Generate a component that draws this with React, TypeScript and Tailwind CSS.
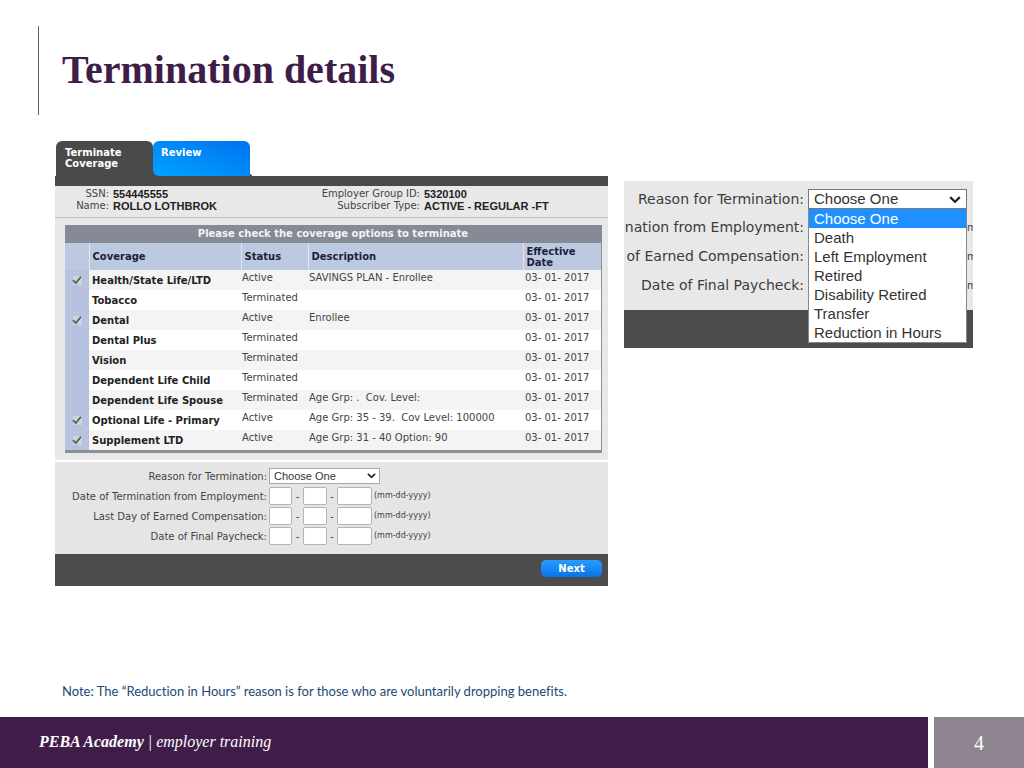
import React from "react";

type Coverage = {
  name: string;
  status: string;
  description: string;
  checked: boolean;
};

const coverages: Coverage[] = [
  { name: "Health/State Life/LTD", status: "Active", description: "SAVINGS PLAN - Enrollee", checked: true },
  { name: "Tobacco", status: "Terminated", description: "", checked: false },
  { name: "Dental", status: "Active", description: "Enrollee", checked: true },
  { name: "Dental Plus", status: "Terminated", description: "", checked: false },
  { name: "Vision", status: "Terminated", description: "", checked: false },
  { name: "Dependent Life Child", status: "Terminated", description: "", checked: false },
  { name: "Dependent Life Spouse", status: "Terminated", description: "Age Grp: .  Cov. Level:", checked: false },
  { name: "Optional Life - Primary", status: "Active", description: "Age Grp: 35 - 39.  Cov Level: 100000", checked: true },
  { name: "Supplement LTD", status: "Active", description: "Age Grp: 31 - 40 Option: 90", checked: true },
];

const reasons = [
  "Choose One",
  "Death",
  "Left Employment",
  "Retired",
  "Disability Retired",
  "Transfer",
  "Reduction in Hours",
];

const dateFields = [
  { id: "termination-date", label: "Date of Termination from Employment:" },
  { id: "last-day", label: "Last Day of Earned Compensation:" },
  { id: "final-paycheck", label: "Date of Final Paycheck:" },
];

function Chevron({ className }: { className: string }) {
  return (
    <svg viewBox="0 0 10 6" className={className} fill="none" stroke="#222" strokeWidth="1.9" aria-hidden="true">
      <path d="M1 1l4 3.8L9 1" />
    </svg>
  );
}

function CoverageTable() {
  return (
    <div className="mx-[10px] mr-[6px] border-b-[3px] border-r border-[#8b8f98] bg-white">
      <table className="w-full table-fixed border-collapse text-left text-[10px] leading-[12px] text-[#444]">
        <caption className="h-[18px] bg-[#868a96] text-center text-[10px] font-bold leading-[17px] text-[#f2f3f6]">
          Please check the coverage options to terminate
        </caption>
        <colgroup>
          <col className="w-6" />
          <col className="w-[152px]" />
          <col className="w-[67px]" />
          <col />
          <col className="w-[78px]" />
        </colgroup>
        <thead>
          <tr className="h-[27px] bg-[#bdc8e1] text-[10px] leading-[11px] text-[#1b2238]">
            <td />
            <th scope="col" className="border-l border-[#dfe5f2] pl-[3px]">Coverage</th>
            <th scope="col" className="border-l border-[#dfe5f2] pl-[3px]">Status</th>
            <th scope="col" className="border-l border-[#dfe5f2] pl-[3px]">Description</th>
            <th scope="col" className="border-l border-[#dfe5f2] pl-[3px]">Effective<br />Date</th>
          </tr>
        </thead>
        <tbody>
          {coverages.map((c) => (
            <tr key={c.name} className="h-5 odd:bg-[#f4f4f4] even:bg-white">
              <td className="bg-[#b7c3de]">
                {c.checked && (
                  <div className="grid place-items-center">
                    <input
                      type="checkbox"
                      defaultChecked
                      aria-label={c.name}
                      className="size-[9px] appearance-none bg-[#ced3dd] [grid-area:1/1]"
                    />
                    <svg viewBox="0 0 10 10" className="pointer-events-none size-[10px] [grid-area:1/1]" fill="none" stroke="#55585c" strokeWidth="1.7" aria-hidden="true">
                      <path d="M1 5.2l2.8 2.8L9 1.8" />
                    </svg>
                  </div>
                )}
              </td>
              <th scope="row" className="whitespace-nowrap pl-[3px] pt-[5px] align-top text-[#222]">{c.name}</th>
              <td className="pl-[1px] pt-[2px] align-top">{c.status}</td>
              <td className="whitespace-pre pl-[1px] pt-[2px] align-top">{c.description}</td>
              <td className="whitespace-nowrap pl-[2px] pt-[2px] align-top">03- 01- 2017</td>
            </tr>
          ))}
        </tbody>
      </table>
    </div>
  );
}

const box = "h-[18px] rounded-[2px] border border-[#b4b4b4] bg-white";

function TerminationForm() {
  return (
    <form className="mt-[2px] text-[10px] text-[#444]">
      <div className="flex flex-col gap-[2px] bg-[#e5e5e5] pb-[9px] pt-[5px]">
        <div className="flex h-[18px] items-center gap-[2px]">
          <label htmlFor="reason" className="w-[212px] text-right">Reason for Termination:</label>
          <div className="relative">
            <select id="reason" className="block h-4 w-[111px] appearance-none border border-[#a8a8a8] bg-white pl-1 font-['Liberation_Sans',sans-serif] text-[11px] leading-[14px] text-[#333]">
              {reasons.map((r) => <option key={r}>{r}</option>)}
            </select>
            <Chevron className="pointer-events-none absolute right-1 top-[5px] w-[9px]" />
          </div>
        </div>
        {dateFields.map((f) => (
          <div key={f.id} className="flex h-[18px] items-center gap-[2px]">
            <label htmlFor={f.id} className="w-[212px] text-right">{f.label}</label>
            <div className="flex items-center">
              <input id={f.id} className={`${box} w-[23px]`} />
              <span className="w-[11px] text-center">-</span>
              <input aria-label="day" className={`${box} w-6`} />
              <span className="w-[10px] text-center">-</span>
              <input aria-label="year" className={`${box} w-[35px]`} />
              <span className="pl-[2px] text-[8px]">(mm-dd-yyyy)</span>
            </div>
          </div>
        ))}
      </div>
      <div className="flex h-8 items-center justify-end bg-[#4c4c4c] pb-[3px] pr-[6px]">
        <button type="button" className="h-[17px] w-[61px] rounded-[5px] bg-linear-to-b from-[#2a9cff] to-[#0672e8] text-[10px] font-bold leading-[15px] text-white">
          Next
        </button>
      </div>
    </form>
  );
}

function CoveragePanel() {
  return (
    <section className="min-w-0">
      <div className="flex items-start pl-px text-[10px] font-bold leading-[11px] text-white">
        <button type="button" className="h-[35px] w-[97px] rounded-t-[6px] bg-[#4a4a4a] pb-[1px] pl-[9px] text-left">
          Terminate<br />Coverage
        </button>
        <div className="bg-linear-to-b from-white from-50% to-[#4a4a4a] to-50%">
          <button type="button" className="block h-[35px] w-[97px] rounded-bl-[6px] rounded-t-[6px] bg-linear-to-tr from-[#00a2ff] to-[#0072f0] pb-[13px] pl-2 text-left">
            Review
          </button>
        </div>
        <span className="size-1 self-end bg-[radial-gradient(circle_at_top_right,white_4px,#4a4a4a_4px)]" />
      </div>
      <div className="h-[10px] bg-[#4a4a4a]" />
      <div className="bg-[#e8e8e8] pb-[7px] text-[10px] leading-[12px] text-[#444]">
        <div className="mb-[7px] flex border-b border-[#bcbcbc] pb-[5px] pt-[2px]">
          <dl className="grid w-[252px] grid-cols-[54px_1fr] gap-x-1">
            <dt className="text-right">SSN:</dt>
            <dd className="font-['Liberation_Sans',sans-serif] text-[11px] font-bold text-[#222]">554445555</dd>
            <dt className="text-right">Name:</dt>
            <dd className="font-['Liberation_Sans',sans-serif] text-[11px] font-bold text-[#222]">ROLLO LOTHBROK</dd>
          </dl>
          <dl className="grid grid-cols-[113px_1fr] gap-x-1">
            <dt className="whitespace-nowrap text-right">Employer Group ID:</dt>
            <dd className="font-['Liberation_Sans',sans-serif] text-[11px] font-bold text-[#222]">5320100</dd>
            <dt className="text-right">Subscriber Type:</dt>
            <dd className="whitespace-nowrap font-['Liberation_Sans',sans-serif] text-[11px] font-bold text-[#222]">ACTIVE - REGULAR -FT</dd>
          </dl>
        </div>
        <CoverageTable />
      </div>
      <TerminationForm />
    </section>
  );
}

function ReasonPanel() {
  return (
    <section className="mt-10 min-w-0 overflow-hidden text-[14px] text-[#3c3c3c]">
      <div className="flex flex-col bg-[#e8e8e8] pb-[10px] pt-1">
        <div className="flex h-[28px] items-center gap-1">
          <label htmlFor="reason-open" className="flex w-[180px] shrink-0 justify-end whitespace-nowrap">Reason for Termination:</label>
          <div className="relative mr-[6px] grow">
            <select id="reason-open" className="block h-5 w-full appearance-none border border-[#777] bg-white pl-[5px] font-['Liberation_Sans',sans-serif] text-[15px] leading-[18px] text-[#333]">
              {reasons.map((r) => <option key={r}>{r}</option>)}
            </select>
            <Chevron className="pointer-events-none absolute right-[6px] top-[7px] w-3" />
            <ul role="listbox" aria-label="Reason for Termination" className="absolute inset-x-0 top-full z-10 border border-t-0 border-[#888] bg-white font-['Liberation_Sans',sans-serif] text-[15px] leading-[19px] text-[#333]">
              {reasons.map((r, i) => (
                <li key={r} role="option" aria-selected={i === 0} className="pl-[5px] aria-selected:bg-[#1e90ff] aria-selected:text-white">
                  {r}
                </li>
              ))}
            </ul>
          </div>
        </div>
        {["ination from Employment:", "of Earned Compensation:", "Date of Final Paycheck:"].map((label) => (
          <div key={label} className="flex h-[29px] items-center gap-1">
            <span className="flex w-[180px] shrink-0 justify-end whitespace-nowrap">{label}</span>
            <span className="h-[22px] grow border-l border-[#999]" />
            <span className="-ml-1 w-[6px] overflow-hidden text-[10px]">m</span>
          </div>
        ))}
      </div>
      <div className="h-[38px] bg-[#4c4c4c]" />
    </section>
  );
}

export default function App() {
  return (
    <div className="flex min-h-screen flex-col bg-white font-['DejaVu_Sans',sans-serif]">
      <header className="ml-[38px] mt-[26px] flex h-[89px] items-center border-l border-[#666] pb-[2px] pl-[23px]">
        <h1 className="font-['Liberation_Serif',serif] text-[40px] font-bold leading-none text-[#401d49]">Termination details</h1>
      </header>
      <main className="flex grow flex-col">
        <div className="grid grid-cols-[553fr_349fr] items-start gap-4 pl-[55px] pr-[51px] pt-[26px]">
          <CoveragePanel />
          <ReasonPanel />
        </div>
        <p className="mb-[16px] mt-auto pl-[62px] font-['Lato',sans-serif] text-[13px] leading-[20px] text-[#1b4a74] [font-variant-ligatures:none]">
          Note: The “Reduction in Hours” reason is for those who are voluntarily dropping benefits.
        </p>
      </main>
      <footer className="flex h-[51px] gap-[6px] font-['Liberation_Serif',serif] text-white">
        <div className="flex grow items-center bg-[#401d49] pb-[2px] pl-[39px] text-[16px] italic">
          <p className="whitespace-pre"><strong>PEBA Academy</strong> | employer training</p>
        </div>
        <div className="flex w-[90px] items-center justify-center bg-[#8d848f] text-[20px]">4</div>
      </footer>
    </div>
  );
}
